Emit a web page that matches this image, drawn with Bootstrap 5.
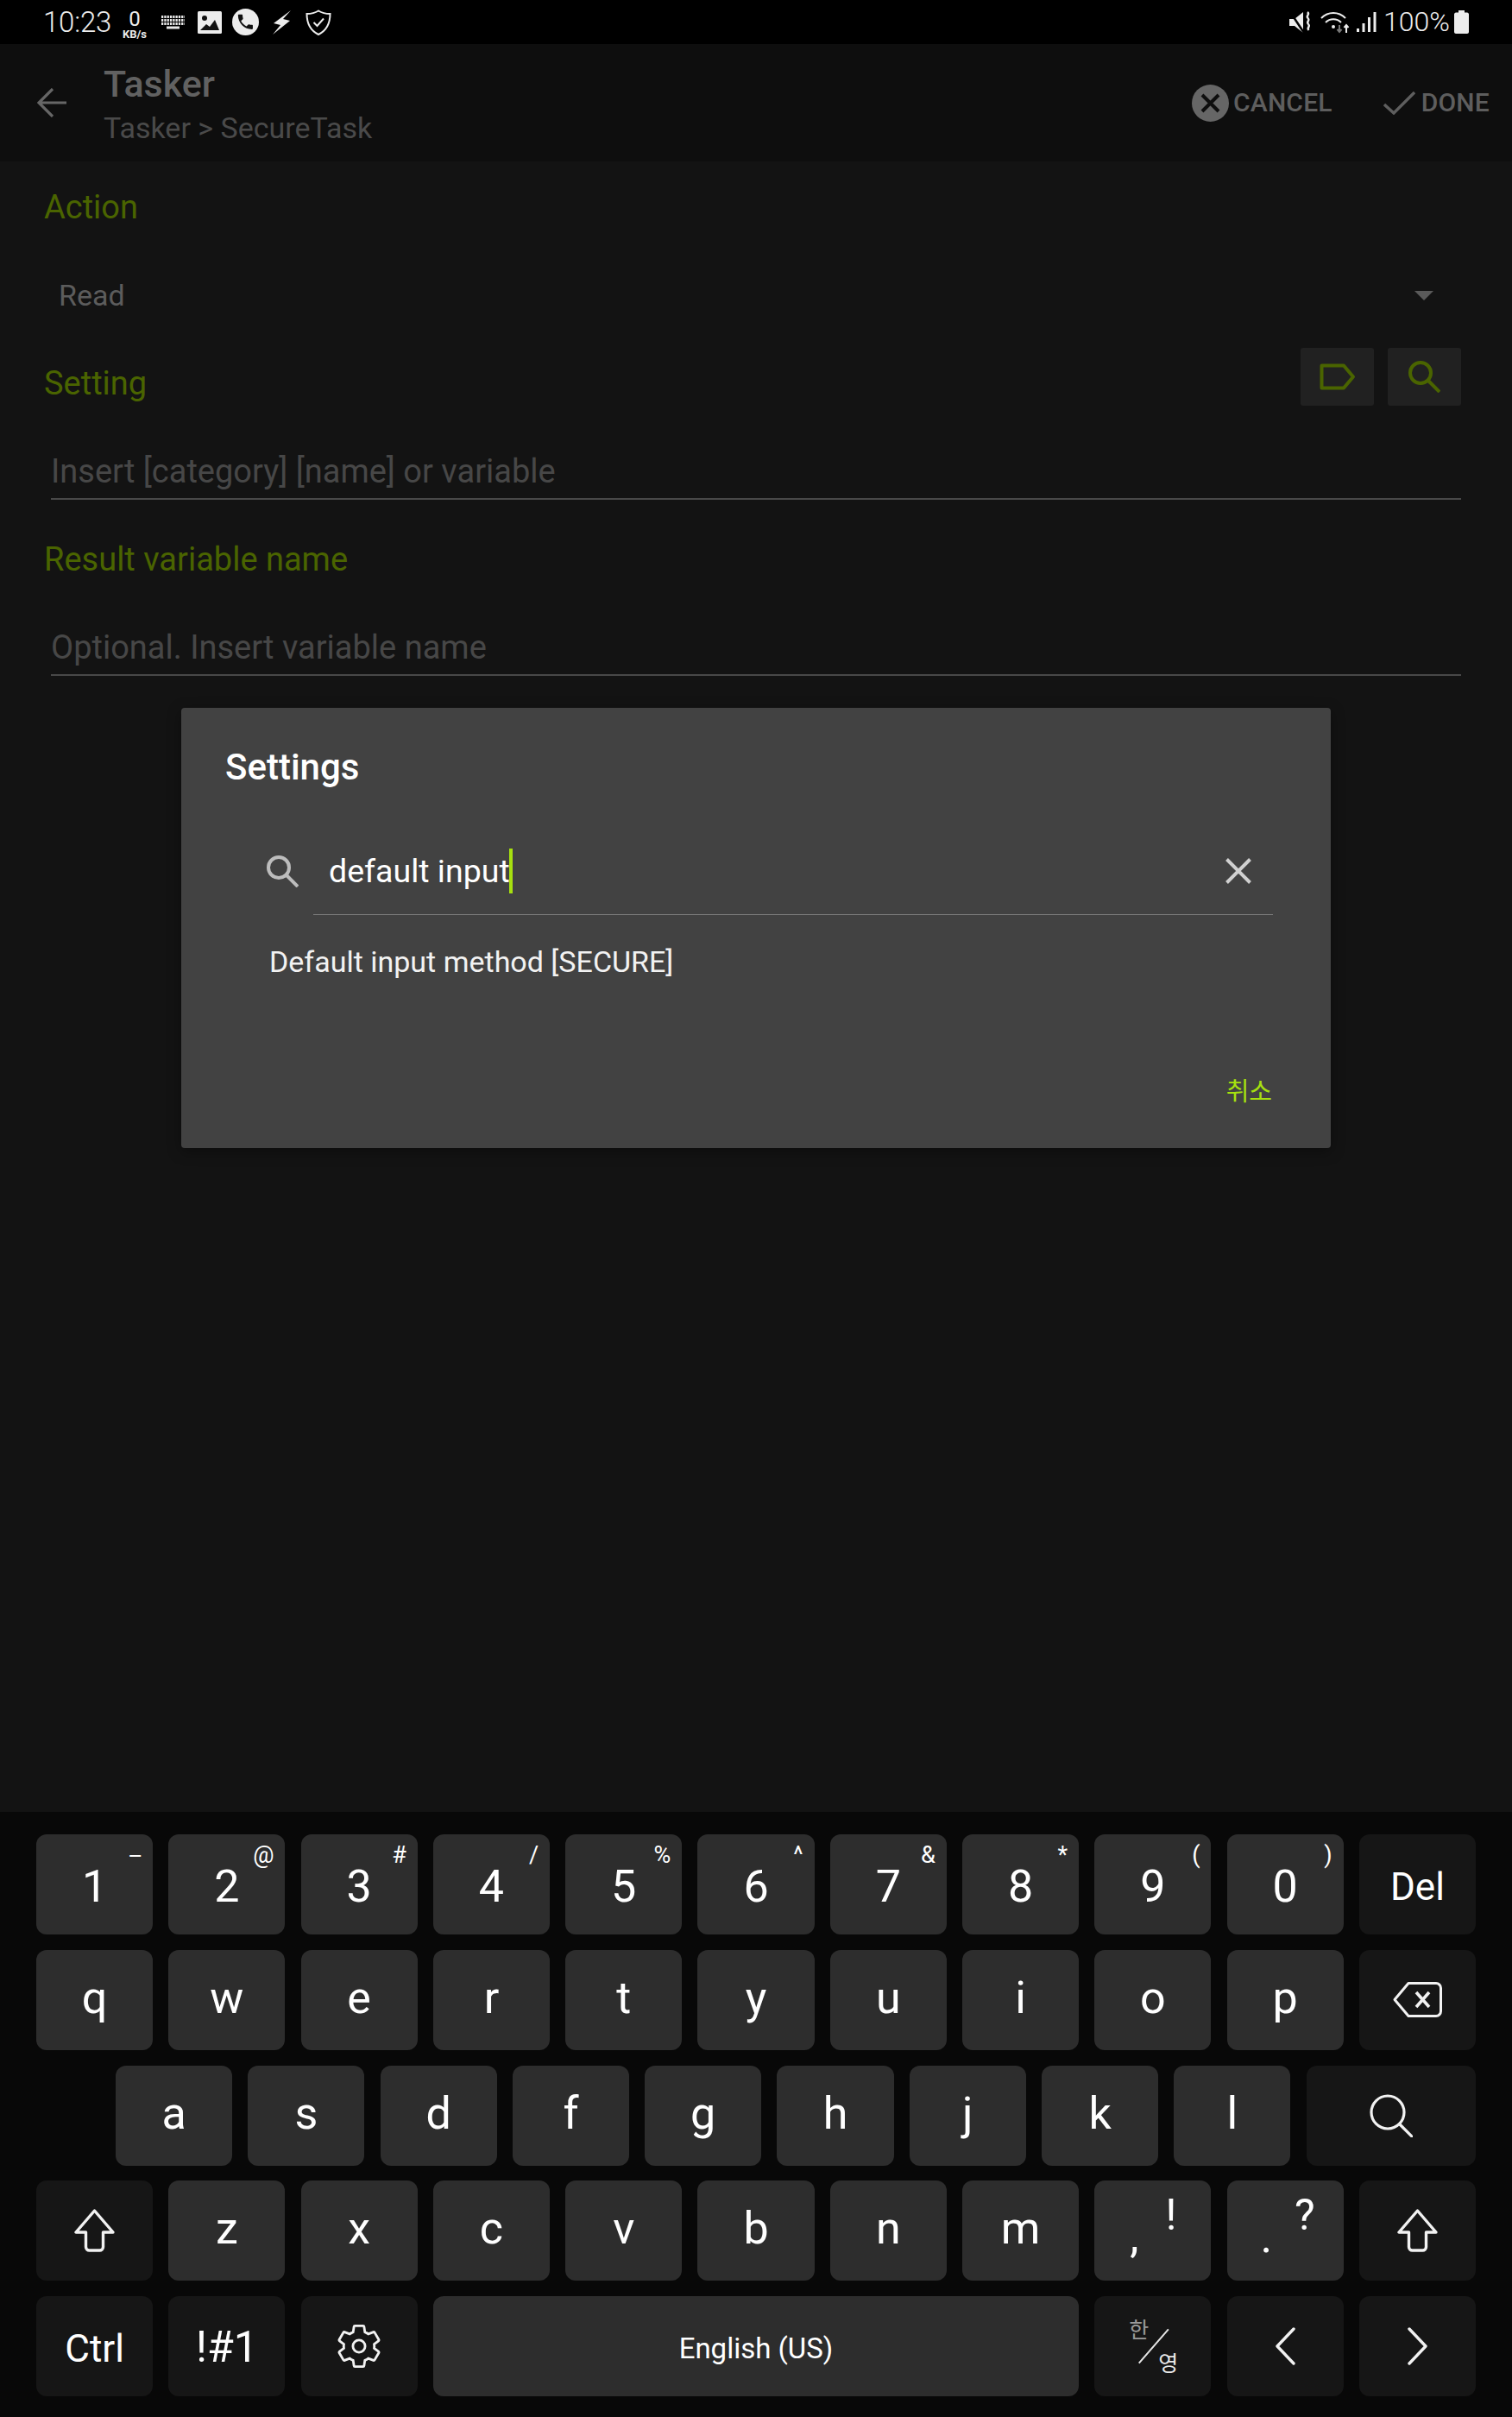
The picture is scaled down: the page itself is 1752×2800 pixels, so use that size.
<!DOCTYPE html>
<html lang="en">
<head>
<meta charset="utf-8">
<title>Tasker</title>
<link href="https://cdn.jsdelivr.net/npm/bootstrap@5.3.0/dist/css/bootstrap.min.css" rel="stylesheet">
<style>
html,body{margin:0;background:#131313;}
body{font-family:"Roboto","Noto Sans CJK KR",sans-serif;}
.app{width:1752px;height:2800px;overflow:hidden;position:relative;background:#131313;}
.sbar{height:51px;background:#000;color:#ececec;padding:0 50px;}
.sbar svg{display:block;flex:none;}
.stime{font-size:33px;font-weight:300;line-height:51px;width:78px;letter-spacing:-.2px;}
.snet{width:34px;margin-left:11px;text-align:center;line-height:1;padding-top:6px;}
.snet b{display:block;font-size:24px;font-weight:400;line-height:21px;}
.snet i{display:block;font-style:normal;font-size:13px;font-weight:700;line-height:13px;white-space:nowrap;}
.m14{margin-left:14px}.m15{margin-left:15px}.m12{margin-left:12px}.m16{margin-left:16px}.m17{margin-left:17px}.m10{margin-left:10px}.m7{margin-left:7px}.m8{margin-left:8px}.m5{margin-left:5px}
.spct{font-size:32px;font-weight:300;line-height:51px;}
.abar{height:136px;background:#0e0e0e;padding-left:43px;padding-right:26px;}
.atitle{margin-left:43px;padding-top:21px;}
.atitle h1{font-size:43px;font-weight:500;color:#616161;line-height:50px;margin:0;}
.atitle p{font-size:34px;color:#4a4a4a;line-height:46px;margin:3px 0 0;}
.abtn{font-size:30px;font-weight:500;color:#5e5e5e;line-height:1;letter-spacing:.2px;}
.abtn svg{display:block;}
.abt2{margin-left:59px;}
.abt2 span{margin-left:7px;}
.abt1 span{margin-left:5px;}
.frm{padding:2px 59px 0 51px;}
.frow{height:102px;}
.flabel{font-size:38px;color:#4a6400;line-height:48px;}
.fval{font-size:34px;color:#5c5c5c;padding-left:17px;}
.ftri{width:0;height:0;border-left:11px solid transparent;border-right:11px solid transparent;border-top:11px solid #5a5a5a;margin-right:32px;}
.gbtn{width:85px;height:67px;background:#212121;border-radius:3px;}
.gbtns{gap:16px;margin-top:-15px;}
.finput{margin-left:8px;padding-top:27px;}
.finput div{font-size:38px;line-height:48px;color:#474747;border-bottom:2px solid #484848;padding-bottom:7px;}
.dlg{position:absolute;left:210px;top:820px;width:1332px;height:510px;background:#424242;border-radius:4px;box-shadow:0 4px 16px rgba(0,0,0,.35);}
.dtitle{font-size:42px;font-weight:500;color:#fff;line-height:48px;padding:45px 0 0 51px;margin:0;}
.dsearch{margin:55px 67px 0 98px;height:92px;}
.dico{margin-top:22px;}
.dinput{flex:1;margin-left:17px;border-bottom:1px solid #7a7a7a;height:92px;padding:0 25px 0 18px;}
.dtxt{font-size:37.5px;color:#fff;line-height:52px;padding-top:15px;}
.dcaret{display:inline-block;width:4px;height:52px;background:#a6e00f;vertical-align:top;margin-left:-1px;}
.dclr{margin-top:26px;}
.dres{font-size:34px;color:#f2f2f2;line-height:48px;margin:30px 0 0 102px;}
.dact{font-size:29px;color:#a6e00f;line-height:36px;margin:auto 68px 47px 0;text-align:right;}
.kbd{background:#080808;margin-top:auto;height:701px;padding:26px 42px 0;gap:17.75px;}
.krow{gap:18.1px;}
.ky{flex:0 0 135.2px;height:116px;border-radius:12px;background:#2d2d2d;color:#fff;font-size:52px;position:relative;}
.ky.fn{background:#161616;}
.ky.dg{padding-top:6px;}
.ky.lt{padding-bottom:4px;}
.ky.tx{font-size:44px;padding-top:5px;}
.ky.sym{font-size:50px;padding-top:3px;}
.ky.sp{flex:1 1 auto;background:#2d2d2d;font-size:33px;padding-top:5px;}
.ky.sc{flex:1 1 auto;}
.hnt{position:absolute;top:4px;right:13px;font-size:27px;line-height:40px;}
.hdash{transform:scaleX(2);right:17px;}
.hntb{position:absolute;top:10px;right:40px;font-size:50px;line-height:60px;}
.hntq{right:33px;}
.mrk{position:absolute;left:41px;top:36px;font-size:52px;line-height:60px;}
.mrkd{left:39px;}
.kr3{margin-left:92px;}
.khan{position:absolute;left:40px;top:24px;font-size:25px;line-height:32px;color:#9a9a9a;}
.keng{position:absolute;left:74px;top:63px;font-size:25px;line-height:32px;color:#e8e8e8;}
.kslash{position:absolute;left:51px;top:77px;width:52px;height:2px;background:#e8e8e8;transform:rotate(-49deg);transform-origin:0 0;}
</style>
</head>
<body>
<div class="app d-flex flex-column">
  <div class="sbar d-flex align-items-center">
    <div class="stime">10:23</div>
    <div class="snet"><b>0</b><i>KB/s</i></div>
    <svg class="m14" width="27" height="16" viewBox="0 0 27 16" fill="none" stroke="#e8e8e8"><path d="M0 1.500H27M0 5.500H27M0 9.500H27" stroke-width="3" stroke-dasharray="2.300 1"/><path d="M6 14H21" stroke-width="3"/></svg>
    <svg class="m15" width="28" height="26" viewBox="0 0 28 26"><rect width="28" height="26" rx="1.500" fill="#ececec"/><circle cx="8" cy="8" r="3" fill="#111"/><path d="M3 22l7-7 4 3 6-8 5 12z" fill="#111"/></svg>
    <svg class="m12" width="31" height="31" viewBox="0 0 31 31"><circle cx="15.500" cy="15.500" r="15.500" fill="#ececec"/><path transform="translate(4 4) scale(.95)" d="M6.620 10.790c1.440 2.830 3.760 5.140 6.590 6.590l2.200-2.200c.27-.27.67-.36 1.020-.24 1.120.37 2.330.57 3.570.57.55 0 1 .45 1 1V20c0 .55-.45 1-1 1-9.390 0-17-7.610-17-17 0-.55.45-1 1-1h3.500c.55 0 1 .45 1 1 0 1.250.2 2.450.57 3.570.11.35.03.74-.25 1.020l-2.200 2.200z" fill="#111"/></svg>
    <svg class="m16" width="21" height="28" viewBox="0 0 21 28"><path d="M21 0L1 15l8 2L0 28l20-16-8-2z" fill="#ececec"/></svg>
    <svg class="m17" width="30" height="30" viewBox="0 0 30 30" fill="none" stroke="#ececec" stroke-width="2"><path d="M15 1.500C19 4 24 5 28.500 5c0 11-3.500 19-13.500 24C5 24 1.500 16 1.500 5 6 5 11 4 15 1.500z"/><path d="M9.500 15l4 4 7.500-8.500"/></svg>
    <div class="flex-grow-1"></div>
    <svg width="26" height="26" viewBox="0 0 26 26"><path d="M0 9h6l10-8v24L6 17H0z" fill="#ececec"/><path d="M1 1l16 24" stroke="#000" stroke-width="2.500"/><path d="M21 1c3.500 3-2.500 4 .5 7s-2.500 4 .5 7-2.500 4 .5 7" fill="none" stroke="#ececec" stroke-width="2.400"/></svg>
    <svg class="m10" width="35" height="27" viewBox="0 0 35 27" fill="none" stroke="#ececec"><path d="M1 9c8-8 20-8 28 0" stroke-width="2"/><path d="M6 14c5-5 13-5 18 0" stroke-width="2"/><circle cx="15" cy="19" r="2" fill="#ececec" stroke="none"/><path d="M22 17v8M19.500 22l2.500 3 2.500-3" stroke="#777" stroke-width="2"/><path d="M30 26v-9M27.500 20l2.500-3 2.500 3" stroke-width="2"/></svg>
    <svg class="m7" width="23" height="24" viewBox="0 0 23 24" fill="#ececec"><rect x="0" y="19" width="3" height="4"/><rect x="6.500" y="13" width="3" height="10"/><rect x="13" y="6" width="3" height="17"/><rect x="19.500" y="0" width="3" height="23"/></svg>
    <div class="spct m8">100%</div>
    <svg class="m5" width="17" height="27" viewBox="0 0 17 27"><path d="M5 0h7v2.500h3c1 0 2 1 2 2V25c0 1-1 2-2 2H2c-1 0-2-1-2-2V4.500c0-1 1-2 2-2h3z" fill="#ececec"/></svg>
  </div>

  <div class="abar d-flex align-items-center">
    <svg width="34" height="34" viewBox="0 0 34 34" fill="none" stroke="#666" stroke-width="3.200"><path d="M34 17H2M18 1L2 17l16 16"/></svg>
    <div class="atitle align-self-start"><h1>Tasker</h1><p>Tasker &gt; SecureTask</p></div>
    <div class="flex-grow-1"></div>
    <div class="abtn abt1 d-flex align-items-center">
      <svg width="43" height="43" viewBox="0 0 43 43"><circle cx="21.500" cy="21.500" r="21.500" fill="#666"/><path d="M12 12l19 19M31 12L12 31" stroke="#0e0e0e" stroke-width="4"/></svg>
      <span>CANCEL</span>
    </div>
    <div class="abtn abt2 d-flex align-items-center">
      <svg width="37" height="27" viewBox="0 0 37 27" fill="none" stroke="#5e5e5e" stroke-width="3.400"><path d="M1 15l11 10L36 1"/></svg>
      <span>DONE</span>
    </div>
  </div>

  <div class="frm">
    <div class="frow d-flex align-items-center"><span class="flabel">Action</span></div>
    <div class="frow d-flex align-items-center justify-content-between"><span class="fval">Read</span><span class="ftri"></span></div>
    <div class="frow d-flex align-items-center justify-content-between"><span class="flabel">Setting</span>
      <div class="d-flex gbtns">
        <div class="gbtn d-flex align-items-center justify-content-center"><svg width="42" height="31" viewBox="0 0 42 31" fill="none" stroke="#4a6400" stroke-width="4" stroke-linejoin="round"><path d="M2.500 2.500H28L39 15.500 28 28.500H2.500z"/></svg></div>
        <div class="gbtn d-flex align-items-center justify-content-center"><svg width="37" height="37" viewBox="0 0 37 37" fill="none" stroke="#4a6400" stroke-width="4"><circle cx="14" cy="14" r="12"/><path d="M23 23l13 13"/></svg></div>
      </div>
    </div>
    <div class="frow finput"><div>Insert [category] [name] or variable</div></div>
    <div class="frow d-flex align-items-center"><span class="flabel">Result variable name</span></div>
    <div class="frow finput"><div>Optional. Insert variable name</div></div>
  </div>

  <div class="dlg d-flex flex-column">
    <h2 class="dtitle">Settings</h2>
    <div class="dsearch d-flex">
      <svg class="dico" width="38" height="38" viewBox="0 0 38 38" fill="none" stroke="#bdbdbd" stroke-width="4"><circle cx="15" cy="15" r="12"/><path d="M24 24l13 13"/></svg>
      <div class="dinput d-flex justify-content-between">
        <div class="dtxt">default input<span class="dcaret"></span></div>
        <svg class="dclr" width="30" height="30" viewBox="0 0 30 30" stroke="#d0d0d0" stroke-width="4"><path d="M1.500 1.500l27 27M28.500 1.500l-27 27"/></svg>
      </div>
    </div>
    <div class="dres">Default input method [SECURE]</div>
    <div class="dact">취소</div>
  </div>

  <div class="kbd d-flex flex-column">
    <div class="krow d-flex">
      <div class="ky dg d-flex align-items-center justify-content-center">1<span class="hnt hdash">-</span></div>
      <div class="ky dg d-flex align-items-center justify-content-center">2<span class="hnt">@</span></div>
      <div class="ky dg d-flex align-items-center justify-content-center">3<span class="hnt">#</span></div>
      <div class="ky dg d-flex align-items-center justify-content-center">4<span class="hnt">/</span></div>
      <div class="ky dg d-flex align-items-center justify-content-center">5<span class="hnt">%</span></div>
      <div class="ky dg d-flex align-items-center justify-content-center">6<span class="hnt">^</span></div>
      <div class="ky dg d-flex align-items-center justify-content-center">7<span class="hnt">&amp;</span></div>
      <div class="ky dg d-flex align-items-center justify-content-center">8<span class="hnt">*</span></div>
      <div class="ky dg d-flex align-items-center justify-content-center">9<span class="hnt">(</span></div>
      <div class="ky dg d-flex align-items-center justify-content-center">0<span class="hnt">)</span></div>
      <div class="ky fn tx d-flex align-items-center justify-content-center">Del</div>
    </div>
    <div class="krow d-flex">
      <div class="ky lt d-flex align-items-center justify-content-center">q</div>
      <div class="ky lt d-flex align-items-center justify-content-center">w</div>
      <div class="ky lt d-flex align-items-center justify-content-center">e</div>
      <div class="ky lt d-flex align-items-center justify-content-center">r</div>
      <div class="ky lt d-flex align-items-center justify-content-center">t</div>
      <div class="ky lt d-flex align-items-center justify-content-center">y</div>
      <div class="ky lt d-flex align-items-center justify-content-center">u</div>
      <div class="ky lt d-flex align-items-center justify-content-center">i</div>
      <div class="ky lt d-flex align-items-center justify-content-center">o</div>
      <div class="ky lt d-flex align-items-center justify-content-center">p</div>
      <div class="ky fn d-flex align-items-center justify-content-center"><svg width="57" height="41" viewBox="0 0 57 41" fill="none" stroke="#f2f2f2" stroke-width="3" stroke-linejoin="round"><path d="M18 1.500H50c3 0 5.500 2.500 5.500 5.500V34c0 3-2.500 5.500-5.500 5.500H18L2 20.500z"/><path d="M27 12l15 17M42 12L27 29" stroke-width="3.600"/></svg></div>
    </div>
    <div class="krow d-flex kr3">
      <div class="ky lt d-flex align-items-center justify-content-center">a</div>
      <div class="ky lt d-flex align-items-center justify-content-center">s</div>
      <div class="ky lt d-flex align-items-center justify-content-center">d</div>
      <div class="ky lt d-flex align-items-center justify-content-center">f</div>
      <div class="ky lt d-flex align-items-center justify-content-center">g</div>
      <div class="ky lt d-flex align-items-center justify-content-center">h</div>
      <div class="ky lt d-flex align-items-center justify-content-center">j</div>
      <div class="ky lt d-flex align-items-center justify-content-center">k</div>
      <div class="ky lt d-flex align-items-center justify-content-center">l</div>
      <div class="ky fn sc d-flex align-items-center justify-content-center"><svg width="50" height="50" viewBox="0 0 50 50" fill="none" stroke="#f2f2f2" stroke-width="3.200" stroke-linecap="round"><circle cx="21" cy="21" r="19"/><path d="M35 35l14 14"/></svg></div>
    </div>
    <div class="krow d-flex">
      <div class="ky fn d-flex align-items-center justify-content-center"><svg width="47" height="50" viewBox="0 0 47 50" fill="none" stroke="#f2f2f2" stroke-width="3.400" stroke-linejoin="round"><path d="M23.500 2L2 27h11.500v17c0 2.500 2 4 4 4h12c2 0 4-1.500 4-4V27H45z"/></svg></div>
      <div class="ky lt d-flex align-items-center justify-content-center">z</div>
      <div class="ky lt d-flex align-items-center justify-content-center">x</div>
      <div class="ky lt d-flex align-items-center justify-content-center">c</div>
      <div class="ky lt d-flex align-items-center justify-content-center">v</div>
      <div class="ky lt d-flex align-items-center justify-content-center">b</div>
      <div class="ky lt d-flex align-items-center justify-content-center">n</div>
      <div class="ky lt d-flex align-items-center justify-content-center">m</div>
      <div class="ky"><span class="mrk">,</span><span class="hntb">!</span></div>
      <div class="ky"><span class="mrk mrkd">.</span><span class="hntb hntq">?</span></div>
      <div class="ky fn d-flex align-items-center justify-content-center"><svg width="47" height="50" viewBox="0 0 47 50" fill="none" stroke="#f2f2f2" stroke-width="3.400" stroke-linejoin="round"><path d="M23.500 2L2 27h11.500v17c0 2.500 2 4 4 4h12c2 0 4-1.500 4-4V27H45z"/></svg></div>
    </div>
    <div class="krow d-flex">
      <div class="ky fn tx d-flex align-items-center justify-content-center">Ctrl</div>
      <div class="ky fn sym d-flex align-items-center justify-content-center">!#1</div>
      <div class="ky fn d-flex align-items-center justify-content-center"><svg width="50" height="52" viewBox="1.500 1 21 22" fill="none" stroke="#f2f2f2" stroke-width="1.200"><path d="M19.430 12.980c.04-.32.07-.64.07-.98 0-.34-.03-.66-.07-.98l2.110-1.650c.19-.15.24-.42.12-.64l-2-3.460c-.09-.16-.26-.25-.44-.25-.06 0-.12.01-.17.03l-2.490 1c-.52-.4-1.080-.73-1.690-.98l-.38-2.650C14.460 2.180 14.250 2 14 2h-4c-.25 0-.46.18-.49.420l-.38 2.650c-.61.25-1.170.59-1.690.98l-2.490-1c-.06-.02-.12-.03-.18-.03-.17 0-.34.09-.43.25l-2 3.460c-.13.22-.07.49.12.64l2.110 1.650c-.04.32-.07.65-.07.98 0 .33.03.66.07.98l-2.110 1.650c-.19.15-.24.42-.12.64l2 3.460c.09.16.26.25.44.25.06 0 .12-.01.17-.03l2.490-1c.52.4 1.080.73 1.690.98l.38 2.650c.03.24.24.42.49.42h4c.25 0 .46-.18.49-.42l.38-2.650c.61-.25 1.170-.59 1.690-.98l2.490 1c.06.02.12.03.18.03.17 0 .34-.09.43-.25l2-3.460c.12-.22.07-.49-.12-.64l-2.110-1.650z"/><circle cx="12" cy="12" r="3"/></svg></div>
      <div class="ky sp d-flex align-items-center justify-content-center">English (US)</div>
      <div class="ky fn"><span class="khan">한</span><span class="kslash"></span><span class="keng">영</span></div>
      <div class="ky fn d-flex align-items-center justify-content-center"><svg width="25" height="44" viewBox="0 0 25 44" fill="none" stroke="#f2f2f2" stroke-width="3.400" stroke-linecap="round" stroke-linejoin="round"><path d="M22 2L3 22l19 20"/></svg></div>
      <div class="ky fn d-flex align-items-center justify-content-center"><svg width="25" height="44" viewBox="0 0 25 44" fill="none" stroke="#f2f2f2" stroke-width="3.400" stroke-linecap="round" stroke-linejoin="round"><path d="M3 2l19 20L3 42"/></svg></div>
    </div>
  </div>
</div>
</body>
</html>
